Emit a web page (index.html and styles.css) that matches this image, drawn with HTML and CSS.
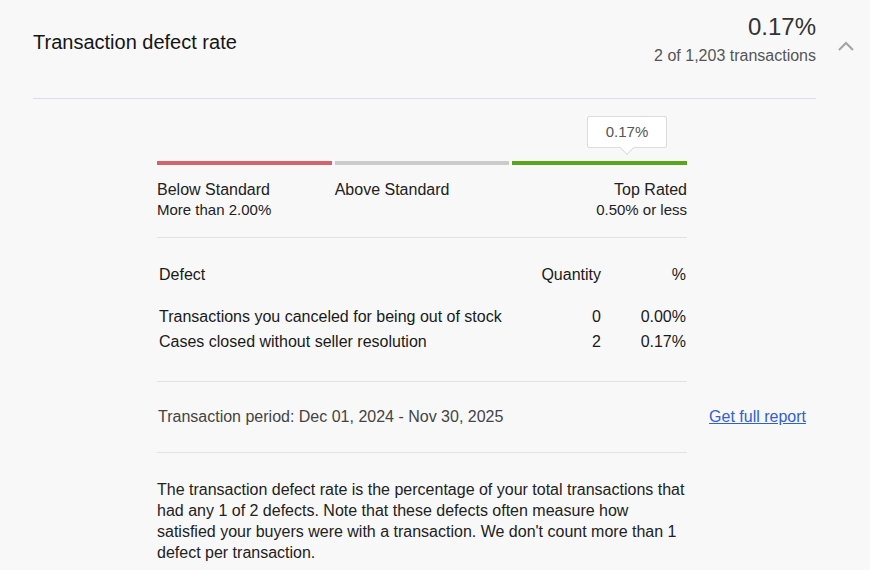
FILE: index.html
```html
<!DOCTYPE html>
<html lang="en">
<head>
<meta charset="utf-8">
<title>Transaction defect rate</title>
<link rel="stylesheet" href="styles.css">
</head>
<body>
<section class="panel">
  <header class="head">
    <h2 class="title">Transaction defect rate</h2>
    <div class="summary">
      <div class="value">0.17%</div>
      <div class="sub">2 of 1,203 transactions</div>
    </div>
    <button class="toggle" aria-label="Collapse">
      <svg width="20" height="12" viewBox="0 0 20 12"><polyline points="3,10 10,3 17,10" fill="none" stroke="#a3a3a3" stroke-width="2"/></svg>
    </button>
  </header>
  <div class="rule"></div>

  <div class="body">
    <div class="scale">
      <div class="marker-row">
        <div class="marker">0.17%</div>
      </div>
      <div class="bars">
        <div class="bar bar-red"></div>
        <div class="bar bar-gray"></div>
        <div class="bar bar-green"></div>
      </div>
      <div class="levels">
        <div class="level">
          <div class="level-name">Below Standard</div>
          <div class="level-desc">More than 2.00%</div>
        </div>
        <div class="level">
          <div class="level-name">Above Standard</div>
        </div>
        <div class="level level-right">
          <div class="level-name">Top Rated</div>
          <div class="level-desc">0.50% or less</div>
        </div>
      </div>
    </div>

    <div class="sep"></div>

    <div class="table">
      <div class="row row-head">
        <span>Defect</span><span class="num">Quantity</span><span class="num">%</span>
      </div>
      <div class="row row-first">
        <span>Transactions you canceled for being out of stock</span><span class="num">0</span><span class="num">0.00%</span>
      </div>
      <div class="row">
        <span>Cases closed without seller resolution</span><span class="num">2</span><span class="num">0.17%</span>
      </div>
    </div>

    <div class="sep sep-lower"></div>

    <div class="period">
      <span class="period-text">Transaction period: Dec 01, 2024 - Nov 30, 2025</span>
      <a class="report" href="#">Get full report</a>
    </div>

    <div class="sep sep-period"></div>

    <p class="note">The transaction defect rate is the percentage of your total transactions that had any 1 of 2 defects. Note that these defects often measure how satisfied your buyers were with a transaction. We don't count more than 1 defect per transaction.</p>
  </div>
</section>
</body>
</html>
```

FILE: styles.css
```css
* { box-sizing: border-box; }

html, body {
  margin: 0;
  background: #f8f8f8;
}

body {
  font-family: "Liberation Sans", Arial, sans-serif;
  color: #1f1f1f;
}

.panel {
  padding-left: 33px;
}

.head {
  display: flex;
  align-items: flex-start;
  padding-top: 13px;
}

.title {
  flex: 1;
  margin: 0;
  padding-top: 17px;
  font-size: 20px;
  line-height: 24px;
  font-weight: normal;
  color: #151515;
}

.summary {
  text-align: right;
}

.value {
  font-size: 24px;
  line-height: 28px;
  color: #333;
}

.sub {
  margin-top: 5px;
  font-size: 16px;
  line-height: 20px;
  color: #555;
}

.toggle {
  width: 54px;
  height: 20px;
  margin-top: 23px;
  padding: 0 0 0 6px;
  border: 0;
  background: none;
  display: flex;
  justify-content: center;
  align-items: center;
}

.rule {
  height: 1px;
  margin: 32px 54px 0 0;
  background: #d9dee4;
}

.body {
  padding: 0 64px 20px 124px;
}

.scale,
.sep,
.table,
.note {
  max-width: 530px;
}

.marker-row {
  display: flex;
  justify-content: flex-end;
  padding: 17px 20px 0 0;
}

.marker {
  position: relative;
  width: 80px;
  height: 32px;
  border: 1px solid #dcdcdc;
  border-radius: 2px;
  background: #fff;
  font-size: 15px;
  line-height: 30px;
  text-align: center;
  color: #555;
}

.marker::after {
  content: "";
  position: absolute;
  left: 34px;
  bottom: -6px;
  width: 9px;
  height: 9px;
  background: #fff;
  border-right: 1px solid #dcdcdc;
  border-bottom: 1px solid #dcdcdc;
  transform: rotate(45deg);
}

.bars {
  display: flex;
  gap: 3px;
  margin-top: 13px;
}

.bar {
  flex: 1;
  height: 4px;
}

.bar-red { background: #d6636b; }
.bar-gray { background: #cbcbcb; }
.bar-green { background: #5aa51b; }

.levels {
  display: flex;
  gap: 3px;
  margin-top: 15px;
}

.level {
  flex: 1;
}

.level-right {
  text-align: right;
}

.level-name {
  font-size: 16px;
  line-height: 20px;
  color: #222;
}

.level-desc {
  font-size: 15px;
  line-height: 20px;
  color: #222;
}

.sep {
  height: 1px;
  margin-top: 17px;
  background: #e2e2e2;
}

.table {
  padding: 27px 1px 0 2px;
}

.row {
  display: grid;
  grid-template-columns: 1fr 80px 85px;
  font-size: 16px;
  line-height: 25px;
  color: #1a1a1a;
}

.row-head {
  line-height: 20px;
  margin-bottom: 19px;
}

.num {
  text-align: right;
}

.sep-lower {
  margin-top: 27px;
}

.period {
  display: flex;
  justify-content: space-between;
  padding: 25px 0 0 1px;
  font-size: 16px;
  line-height: 20px;
}

.period-text {
  color: #444;
}

.report {
  color: #3160d6;
  text-decoration: underline;
}

.sep-period {
  margin-top: 25px;
}

.note {
  margin: 26px 0 0;
  font-size: 16px;
  line-height: 21px;
  color: #222;
}
```
